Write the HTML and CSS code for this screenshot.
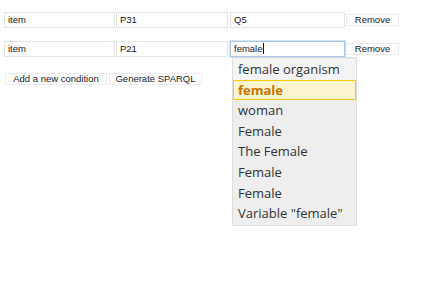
FILE: index.html
```html
<!DOCTYPE html>
<html>
<head>
<meta charset="utf-8">
<link rel="stylesheet" href="styles.css">
</head>
<body>
<div class="page">
  <div class="row">
    <div class="field">item</div>
    <div class="field">P31</div>
    <div class="field wide">Q5</div>
    <div class="btn remove">Remove</div>
  </div>
  <div class="row second">
    <div class="field">item</div>
    <div class="field">P21</div>
    <div class="field wide focus">female<span class="caret"></span></div>
    <div class="btn remove">Remove</div>
  </div>
  <div class="actions">
    <div class="btn add">Add a new condition</div>
    <div class="btn gen">Generate SPARQL</div>
  </div>
  <ul class="menu">
    <li class="item first">female organism</li>
    <li class="item active">female</li>
    <li class="item">woman</li>
    <li class="item">Female</li>
    <li class="item">The Female</li>
    <li class="item">Female</li>
    <li class="item">Female</li>
    <li class="item">Variable "female"</li>
  </ul>
</div>
</body>
</html>
```
FILE: styles.css
```css
html, body {
  margin: 0;
  padding: 0;
  background: #ffffff;
}
.page {
  position: relative;
  width: 440px;
  height: 286px;
  padding: 12px 0 0 4px;
  box-sizing: border-box;
  font-family: "Liberation Sans", Arial, sans-serif;
  font-size: 9.5px;
  color: #222;
}
.row {
  display: flex;
  align-items: center;
  height: 16px;
}
.row.second {
  margin-top: 13px;
}
.field {
  width: 111px;
  height: 16px;
  box-sizing: border-box;
  border: 1px solid #e4e4e4;
  padding: 0 3px;
  line-height: 14px;
  margin-right: 1px;
  background: #fff;
}
.field + .field {
  width: 112px;
  margin-right: 2px;
}
.field.wide {
  width: 115px;
  margin-right: 1px;
}
.field.focus {
  border-color: #a9c4e6;
  box-shadow: 0 0 0 1px #d6e4f5;
}
.caret {
  display: inline-block;
  width: 1px;
  height: 11px;
  background: #111;
  vertical-align: -2px;
}
.btn {
  height: 12px;
  box-sizing: border-box;
  border: 1px solid #ececec;
  background: #fff;
  text-align: center;
  line-height: 10px;
  color: #222;
}
.remove {
  width: 53px;
}
.actions {
  display: flex;
  gap: 2px;
  margin-top: 16px;
  padding-left: 1px;
}
.add { width: 102px; }
.gen { width: 93px; }
.menu {
  position: absolute;
  left: 232px;
  top: 57px;
  width: 125px;
  margin: 0;
  padding: 1px 0;
  list-style: none;
  background: #eeeeee;
  border: 1px solid #dddddd;
  box-sizing: border-box;
  font-family: "Open Sans", "DejaVu Sans", sans-serif;
  font-size: 13px;
  color: #333333;
}
.item {
  height: 20.6px;
  line-height: 19px;
  padding: 0 4px;
  box-sizing: border-box;
  border: 1px solid transparent;
  white-space: nowrap;
}
.item.first {
  background: #f4f4f4;
}
.item.active {
  background: #fdf5ce;
  border-color: #fbcb09;
  color: #c77405;
  font-weight: bold;
}
```
